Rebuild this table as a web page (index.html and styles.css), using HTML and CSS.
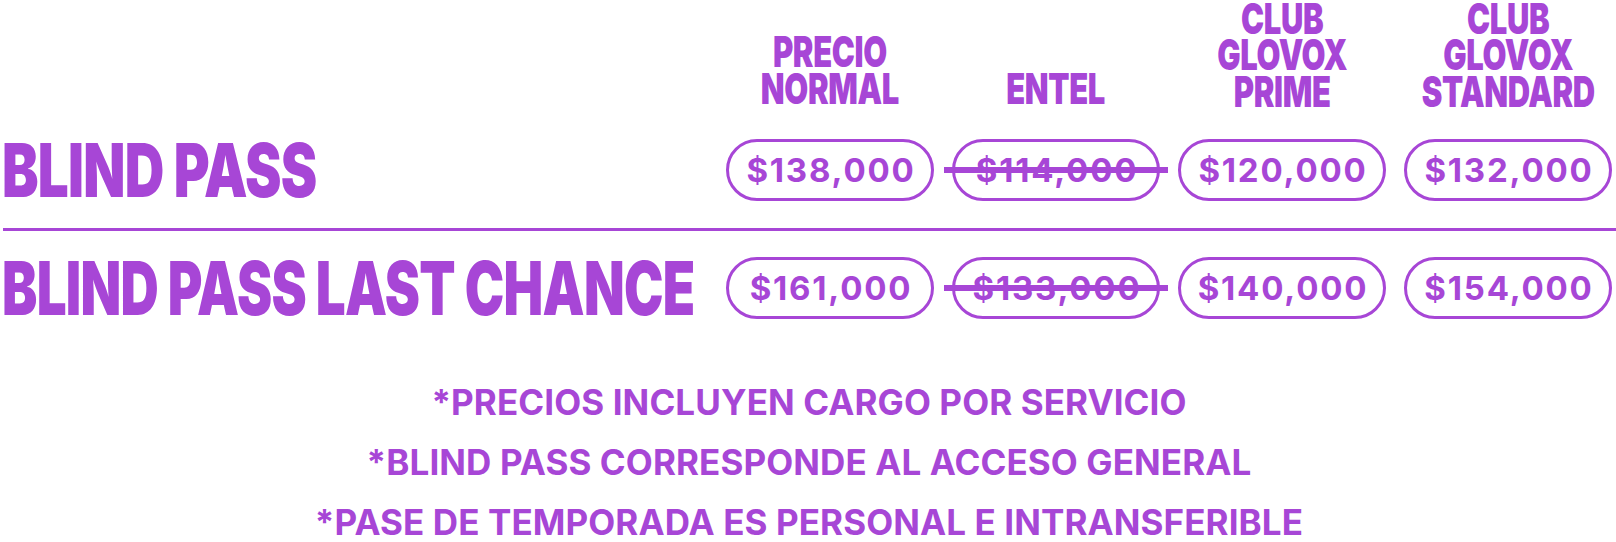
FILE: index.html
```html
<!DOCTYPE html>
<html lang="es">
<head>
<meta charset="utf-8">
<title>Precios Blind Pass</title>
<link rel="stylesheet" href="styles.css">
</head>
<body>
<main class="pricing">
  <section class="grid">
    <div class="corner"></div>
    <div class="col-head short"><span class="cond">PRECIO<br>NORMAL</span></div>
    <div class="col-head short"><span class="cond">ENTEL</span></div>
    <div class="col-head"><span class="cond">CLUB<br>GLOVOX<br>PRIME</span></div>
    <div class="col-head"><span class="cond">CLUB<br>GLOVOX<br>STANDARD</span></div>

    <div class="title"><span class="cond wide">BLIND PASS</span></div>
    <div class="pill">$138,000</div>
    <div class="pill strike">$114,000</div>
    <div class="pill">$120,000</div>
    <div class="pill">$132,000</div>

    <div class="divider"></div>

    <div class="title"><span class="cond">BLIND PASS LAST CHANCE</span></div>
    <div class="pill">$161,000</div>
    <div class="pill strike">$133,000</div>
    <div class="pill">$140,000</div>
    <div class="pill">$154,000</div>
  </section>
  <section class="notes">
    <p>*PRECIOS INCLUYEN CARGO POR SERVICIO</p>
    <p>*BLIND PASS CORRESPONDE AL ACCESO GENERAL</p>
    <p>*PASE DE TEMPORADA ES PERSONAL E INTRANSFERIBLE</p>
  </section>
</main>
</body>
</html>
```

FILE: styles.css
```css
html, body {
  margin: 0;
  padding: 0;
  background: #ffffff;
  overflow: hidden;
}

body {
  color: #a746d6;
  font-family: Inter, "Liberation Sans", sans-serif;
}

.pricing {
  width: 1616px;
}

.grid {
  display: grid;
  grid-template-columns: minmax(0, 1fr) repeat(4, 208px);
  grid-template-rows: 139px 62px auto 62px;
  column-gap: 18px;
  padding-right: 4px;
}

.cond {
  display: inline-block;
  white-space: nowrap;
}

.col-head {
  align-self: end;
  display: flex;
  justify-content: center;
  padding-bottom: 30px;
  font-weight: 900;
  font-size: 43px;
  line-height: 36.5px;
  text-align: center;
}

.col-head.short {
  padding-bottom: 33px;
}

.col-head .cond {
  transform: scaleX(0.72);
  transform-origin: center;
  letter-spacing: -0.5px;
}

.title {
  align-self: center;
  display: flex;
  min-width: 0;
  font-weight: 900;
  font-size: 74px;
  line-height: 74px;
  padding-left: 2px;
}

.title .cond {
  transform: scaleX(0.715);
  transform-origin: left center;
  letter-spacing: -1px;
}

.title .cond.wide {
  transform: scaleX(0.74);
}

.pill {
  position: relative;
  display: flex;
  align-items: center;
  justify-content: center;
  box-sizing: border-box;
  height: 62px;
  border: 3px solid #a746d6;
  border-radius: 31px;
  font-weight: 700;
  font-size: 33px;
  letter-spacing: 1.8px;
  padding-left: 2px;
}

.pill.strike::after {
  content: "";
  position: absolute;
  left: -11px;
  right: -11px;
  top: 25px;
  height: 6px;
  background: #a746d6;
}

.divider {
  grid-column: 1 / -1;
  height: 3px;
  margin: 27px -4px 26px 3px;
  background: #a746d6;
}

.notes {
  display: flex;
  flex-direction: column;
  align-items: center;
  gap: 26px;
  padding-top: 66px;
  padding-left: 2px;
}

.notes p {
  margin: 0;
  font-weight: 700;
  font-size: 35px;
  line-height: 34px;
  letter-spacing: 0.1px;
  white-space: nowrap;
}
```
